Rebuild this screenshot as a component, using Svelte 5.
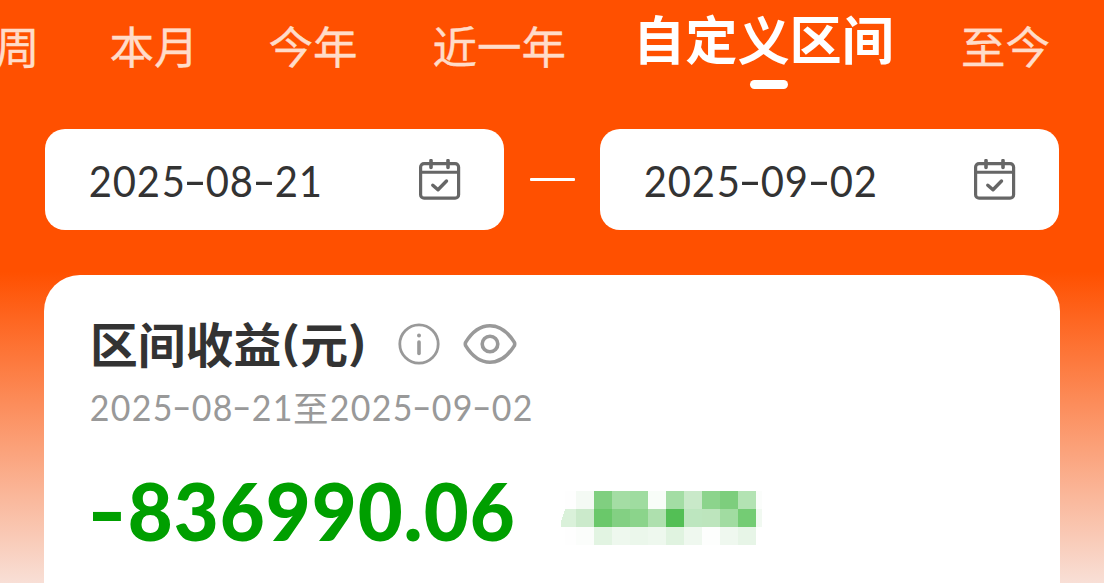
<script>
    const tabs = ["周", "本月", "今年", "近一年", "自定义区间", "至今"];
    const activeTab = "自定义区间";

    const startDate = "2025-08-21";
    const endDate = "2025-09-02";
    const profit = "-836990.06";

    // masked value, one colour per tile
    const tile = 18;
    const mosaic = [
        ["#fefefe", "#f4faf4", "#80cf80", "#a4dda4", "#9fdca0", "#f8fdf8", "#a3dda4", "#c9e9c9", "#8cd48c", "#7dce7d", "#b3e3b3", "#fbfdfb"],
        ["#daf1da", "#cbeacb", "#6ac86a", "#83d083", "#8bd48b", "#aee0ae", "#53bf55", "#bde6bf", "#bde5bd", "#a1dca1", "#74cc74", "#f1f9f1"],
        ["#fefefe", "#fbfdfb", "#e2f4e2", "#eef8ee", "#ebf7eb", "#eef8ee", "#e0f3e0", "#eff8ef", "#fdfefd", "#eff8ef", "#e7f5e7", "#ffffff"],
    ];
</script>

{#snippet digits(text)}
    {#each text.split("") as ch}{#if ch === "-"}<span class="dash"><i>-</i></span>{:else if ch === "."}<span class="dot">.</span>{:else}<span class="digit">{ch}</span>{/if}{/each}
{/snippet}

{#snippet calendar()}
    <svg class="calendar" width="42" height="42" viewBox="0 0 42 42" fill="none" stroke="#666" stroke-linecap="round" stroke-linejoin="round">
        <rect x="1.6" y="4.6" width="38" height="34.6" rx="3.5" stroke-width="3.2" />
        <path d="M2 13.2H39" stroke-width="3" />
        <path d="M12 1.6V8.4M29 1.6V8.4" stroke-width="3.6" />
        <path d="M13.8 26.2L19 30.8L27.5 22" stroke-width="3.4" />
    </svg>
{/snippet}

<div class="page">
    <nav class="tabs">
        {#each tabs as tab}
            <span class="tab" class:active={tab === activeTab}>{tab}</span>
        {/each}
    </nav>

    <div class="range">
        <div class="date-box">
            <span class="date">{@render digits(startDate)}</span>
            {@render calendar()}
        </div>
        <span class="separator"></span>
        <div class="date-box">
            <span class="date">{@render digits(endDate)}</span>
            {@render calendar()}
        </div>
    </div>

    <section class="card">
        <div class="title-row">
            <h2>区间收益<span class="paren">(</span>元<span class="paren">)</span></h2>
            <svg class="info" width="42" height="42" viewBox="0 0 42 42" fill="none" stroke="#999">
                <circle cx="21" cy="21" r="19.2" stroke-width="2.8" />
                <circle cx="21" cy="12.4" r="2" fill="#999" stroke="none" />
                <path d="M21 19V30.5" stroke-width="3.6" stroke-linecap="round" />
            </svg>
            <svg class="eye" width="54" height="42" viewBox="0 0 54 42" fill="none" stroke="#999" stroke-width="3.6">
                <path d="M2.6 19.4C9 9 17 2.8 27 2.8S45 9 51.4 19.4Q52 21 51.4 22.6C45 33 37 39.2 27 39.2S9 33 2.6 22.6Q2 21 2.6 19.4Z" stroke-linejoin="round" />
                <circle cx="27" cy="21" r="7.8" />
            </svg>
        </div>
        <div class="period">{@render digits(startDate)}<span class="to">至</span>{@render digits(endDate)}</div>
        <div class="profit-row">
            <span class="profit">{@render digits(profit)}</span>
            <svg class="mosaic" width="204" height="54" viewBox="0 0 204 54" shape-rendering="crispEdges">
                {#each mosaic as row, y}
                    {#each row as fill, x}
                        {#if x === 0 && y === 1}
                            <path d="M4 18H15V36H0V31Z" {fill} />
                        {:else if x === 0}
                            <rect x="4" y={y * tile} width="11" height={tile} {fill} />
                        {:else}
                            <rect x={15 + (x - 1) * tile} y={y * tile} width={x === 11 ? 6 : tile} height={tile} {fill} />
                        {/if}
                    {/each}
                {/each}
            </svg>
        </div>
    </section>
</div>

<style>
    :global(body) {
        margin: 0;
        overflow: hidden;
    }

    .page {
        display: flex;
        flex-direction: column;
        box-sizing: border-box;
        width: 1104px;
        height: 583px;
        overflow: hidden;
        background: linear-gradient(#ff5000 0, #ff5000 272px, #f8dfd6 583px);
        font-family: Lato, "Noto Sans CJK SC", sans-serif;
    }

    .tabs {
        display: flex;
        flex: none;
        gap: 70px;
        height: 129px;
        margin-left: -5px;
        white-space: nowrap;
    }

    .tab {
        flex: none;
        padding-top: 13px;
        font-family: "Noto Sans CJK SC", sans-serif;
        font-size: 44.5px;
        line-height: 64px;
        color: #ffdcc9;
        -webkit-text-stroke: 0.4px #ffdcc9;
    }

    .tab:nth-child(4) {
        margin-left: 5px;
    }

    .tab.active {
        display: flex;
        flex-direction: column;
        align-items: center;
        margin: 0 -3px 0 -3px;
        padding-top: 5px;
        font-size: 52.2px;
        font-weight: 700;
        color: #fff;
        -webkit-text-stroke: 0;
    }

    .tab.active::after {
        content: "";
        width: 38px;
        height: 9px;
        margin: 11px 0 0 11px;
        border-radius: 5px;
        background: #fff;
    }

    .range {
        display: flex;
        flex: none;
        align-items: center;
        justify-content: space-between;
        padding: 0 45px;
    }

    .date-box {
        display: flex;
        align-items: center;
        justify-content: space-between;
        box-sizing: border-box;
        width: 459px;
        height: 101px;
        padding: 0 43px 0 43px;
        border-radius: 20px;
        background: #fff;
    }

    .separator {
        width: 45px;
        height: 3px;
        border-radius: 1px;
        background: #fff;
    }

    .digit,
    .dash,
    .dot {
        display: inline-block;
        text-align: center;
    }

    .digit {
        transform: scaleX(0.93);
    }

    .dash i {
        display: inline-block;
        font-style: normal;
    }

    .date {
        display: flex;
        padding-top: 2px;
        font-size: 43px;
        line-height: 60px;
        color: #333;
    }

    .date .digit {
        width: 24.2px;
    }

    .date .dash {
        width: 20.5px;
    }

    .date .dash i {
        transform: translateY(-1px) scaleX(1.5);
    }

    .card {
        flex: 1;
        margin: 45px 44px 0;
        padding: 35px 46px 0;
        border-radius: 36px 36px 0 0;
        background: #fff;
    }

    .title-row {
        display: flex;
        align-items: center;
        height: 68px;
    }

    h2 {
        width: 308px;
        margin: 0;
        padding-bottom: 3px;
        font-family: "Noto Sans CJK SC", sans-serif;
        font-size: 47.8px;
        font-weight: 700;
        line-height: 65px;
        white-space: nowrap;
        color: #333;
    }

    .paren {
        display: inline-block;
        width: 19px;
        text-align: center;
        transform: translateY(-2px) scale(1.1, 0.9);
    }

    .eye {
        margin-left: 23px;
    }

    .period {
        display: flex;
        height: 60px;
        margin-left: -1px;
        font-size: 36.5px;
        line-height: 59px;
        color: #999;
    }

    .period .digit {
        width: 21px;
    }

    .period .dash {
        width: 18px;
    }

    .period .dash i {
        transform: translateY(-1px) scaleX(1.5);
    }

    .to {
        width: 35.5px;
        font-family: "Noto Sans CJK SC", sans-serif;
        font-size: 35.5px;
        line-height: 57px;
    }

    .profit-row {
        display: flex;
        align-items: center;
        height: 150px;
    }

    .profit {
        display: flex;
        width: 471px;
        padding-bottom: 6px;
        font-size: 80px;
        font-weight: 900;
        line-height: 100px;
        color: #009f00;
    }

    .profit .digit {
        width: 46.1px;
        transform: scaleX(0.97);
    }

    .profit .dash {
        width: 36.5px;
    }

    .profit .dot {
        width: 20px;
    }

    .profit .dash i {
        transform: translate(-1px, 0) scaleX(1.32);
    }

    .mosaic {
        margin-top: 10px;
    }
</style>
